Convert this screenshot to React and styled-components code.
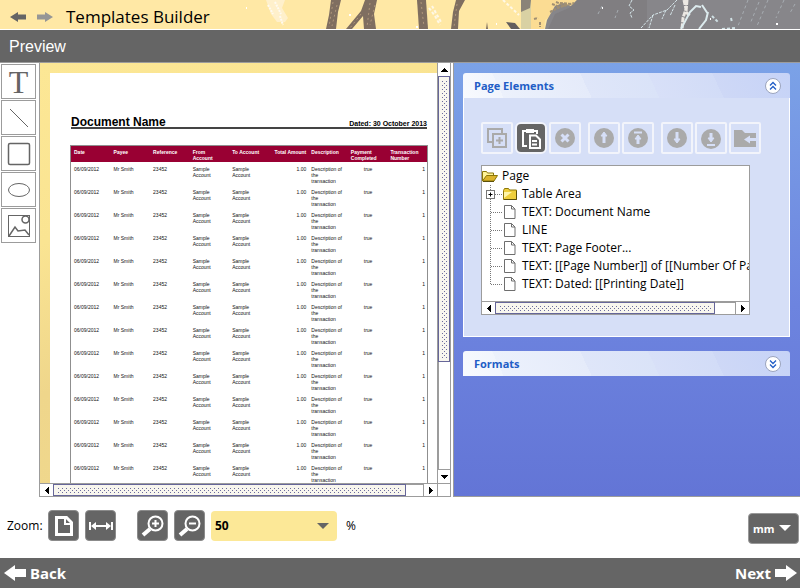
import React from "react";
import styled, { createGlobalStyle } from "styled-components";

const GlobalStyle = createGlobalStyle`
  *, *::before, *::after { box-sizing: border-box; }
  body { margin: 0; background: #fff; color: #000; font: 12px/18px "Open Sans", sans-serif; }
  button, select { margin: 0; padding: 0; border: 0; background: none; color: inherit; font: inherit; cursor: pointer; }
  h1, h2, h3, ul { margin: 0; padding: 0; font: inherit; list-style: none; }
  svg { display: block; flex: none; }
`;

const grey = "#656565";
const line = "#9c9c9c";

const Page = styled.div`
  display: flex;
  flex-direction: column;
  height: 100vh;
  overflow: hidden;
`;

/* Title bar */
const TitleBar = styled.header`
  position: relative;
  display: flex;
  align-items: center;
  flex: none;
  height: 30px;
  padding: 4px 10px 0;
  border-bottom: 1px solid #fff;
  background: #ffe8a5;
  overflow: hidden;
`;
const Artwork = styled.svg`
  position: absolute;
  inset: 0;
  width: 100%;
  height: 29px;
`;
const NavButton = styled.button`
  position: relative;
  margin-right: 11px;
  color: ${(p) => (p.$dim ? "#969696" : grey)};
`;
const Title = styled.h1`
  position: relative;
  padding-left: 2px;
  font-size: 17px;
  line-height: 24px;
`;
const PreviewBar = styled.div`
  flex: none;
  height: 33px;
  padding: 0 9px;
  border-bottom: 1px solid ${line};
  background: ${grey};
  color: #fff;
  font: 16px/33px "Liberation Sans", sans-serif;
`;

/* Workspace */
const Workspace = styled.main`
  display: flex;
  flex: 1;
  min-height: 0;
`;
const ToolColumn = styled.nav`
  display: flex;
  flex-direction: column;
  flex: none;
  gap: 1px;
  width: 39px;
  padding: 1px 3px 0 1px;
`;
const ToolButton = styled.button`
  display: grid;
  place-items: center;
  width: 35px;
  height: 35px;
  border: 1px solid ${line};
  background: #fff;
  font: 32px/32px "Liberation Serif", serif;
  color: ${grey};
`;
const Preview = styled.section`
  display: grid;
  flex: 1 1 412px;
  min-width: 0;
  grid-template: minmax(0, 1fr) 14px / minmax(0, 1fr) 14px;
  border-left: 1px solid ${line};
`;
const Canvas = styled.div`
  padding: 10px 0 0 10px;
  overflow: hidden;
  background: linear-gradient(155deg, #fce795 0%, #fae492 30%, #efd68b 55%, #f0da8f 100%);
`;
const Sheet = styled.article`
  min-height: 100%;
  padding: 43px 9px 0 20px;
  background: #fff;
  font-family: "Liberation Sans", sans-serif;
`;
const SheetHead = styled.div`
  display: flex;
  align-items: baseline;
  justify-content: space-between;
  height: 13px;
  margin: 0 1px 16px;
  border-bottom: 2px solid #444;
  line-height: 12px;
  font-weight: bold;
`;
const SheetTitle = styled.h2`
  font-size: 12px;
  font-weight: bold;
`;
const SheetDate = styled.span`
  font-size: 7px;
`;
const DataTable = styled.table`
  width: 100%;
  table-layout: fixed;
  border-collapse: separate;
  border-spacing: 0;
  border: 1px solid #8f8f8f;
  border-bottom: 0;
  font-size: 5px;
  line-height: 6px;
`;
const HeadCell = styled.th`
  height: 16px;
  padding: 3px 2px 1px 3px;
  background: #990033;
  color: #fff;
  text-align: ${(p) => p.$align || "left"};
  vertical-align: top;
  white-space: nowrap;
`;
const DataCell = styled.td`
  height: 23px;
  padding: 4px 2px 1px 3px;
  color: #111;
  text-align: ${(p) => p.$align || "left"};
  vertical-align: top;
  white-space: nowrap;
`;

/* Scroll bars */
const Bar = styled.div`
  display: flex;
  min-width: 0;
  min-height: 0;
  flex-direction: ${(p) => (p.$vertical ? "column" : "row")};
  border: 1px solid ${line};
  border-width: ${(p) => (p.$vertical ? "0 1px 0 1px" : "1px 0 1px 0")};
  background: #fff;
`;
const BarButton = styled.button`
  display: grid;
  place-items: center;
  flex: none;
  width: ${(p) => (p.$vertical ? "auto" : "13px")};
  height: ${(p) => (p.$vertical ? "13px" : "auto")};
  color: #000;
`;
const Thumb = styled.div`
  flex: ${(p) => p.$size};
  border: 1px solid #666699;
  padding: ${(p) => (p.$vertical ? "3px 2px" : "2px 3px")};
  background:
    conic-gradient(from 270deg at 1px 1px, #6b6b9e 25%, transparent 0) 3px 3px / 4px 4px content-box,
    conic-gradient(from 270deg at 1px 1px, #6b6b9e 25%, transparent 0) 1px 1px / 4px 4px content-box,
    #f8f6ee;
`;
const Groove = styled.div`
  flex: ${(p) => p.$size};
  border: 1px solid ${line};
  border-width: ${(p) => (p.$vertical ? "0 0 1px 1px" : "1px 1px 0 0")};
`;
const Corner = styled.div`
  border: 1px solid ${line};
`;

/* Side panel */
const Side = styled.aside`
  flex: 1 1 347px;
  min-width: 0;
  margin-left: 2px;
  padding: 10px 10px 0 9px;
  border: 1px solid ${line};
  border-width: 0 0 1px 1px;
  background: linear-gradient(#7ba2e7, #6d84df 56%, #6375d6);
`;
const Card = styled.section`
  margin-bottom: 14px;
`;
const CardHead = styled.div`
  display: flex;
  align-items: center;
  justify-content: space-between;
  height: 25px;
  padding: 0 9px 0 11px;
  border-radius: 3px 3px 0 0;
  background: linear-gradient(65deg,
    #f8fafe 0, #f1f5fd 12%, #ecf1fc 12%, #e5ebfa 38%, #dfe6f9 38%, #dae3f8 58%, #d8e0f8 58%, #d2dcf7 77%, #ced8f6 77%, #c6d3f7);
`;
const CardTitle = styled.h3`
  color: #215dc6;
  font-size: 11px;
  font-weight: bold;
`;
const CardBody = styled.div`
  padding: 24px 28px 21px 17px;
  border: 1px solid #fff;
  border-top: 0;
  background: #d6dff7;
`;
const Actions = styled.div`
  display: flex;
  gap: 7px;
`;
const ActionGroup = styled.div`
  display: flex;
  gap: 2px;
`;
const ActionButton = styled.button`
  display: grid;
  place-items: center;
  width: 32px;
  height: 32px;
  border: 2px solid #f2f4fb;
  border-radius: ${(p) => (p.$active ? "6px" : "2px")};
  background: ${(p) => (p.$active ? grey : "#d6dff7")};
  color: ${(p) => (p.$active ? "#fff" : "#aaaaaa")};
`;
const TreeBox = styled.div`
  display: flex;
  flex-direction: column;
  height: 150px;
  margin: 11px 11px 0 0;
  border: 1px solid ${line};
  background: #fff;
`;
const Tree = styled.ul`
  flex: 1;
  padding-top: 1px;
  overflow: hidden;
  white-space: nowrap;
`;
const Branch = styled.ul`
  padding-left: 8px;
`;
const TreeRow = styled.div`
  display: flex;
  align-items: center;
  gap: ${(p) => p.$gap};
  height: 18px;
`;
const NodeIcon = styled.span`
  display: grid;
  flex: none;
  justify-items: center;
  width: 16px;
  margin-right: 4px;
`;
const TreeBar = styled.div`
  display: grid;
  height: 14px;
  margin-bottom: -1px;
`;

/* Footer controls */
const ZoomBar = styled.div`
  display: flex;
  align-items: center;
  flex: none;
  height: 61px;
  padding: 0 1px 4px 7px;
`;
const Caption = styled.label`
  width: 41px;
`;
const DarkButton = styled.button`
  display: grid;
  place-items: center;
  width: 31px;
  height: 31px;
  margin-right: ${(p) => (p.$last ? "21px" : "6px")};
  border: 1px solid #8b8b8b;
  border-radius: 4px;
  background: ${grey};
  color: #fff;
`;
const Picker = styled.span`
  position: relative;
  width: ${(p) => (p.$dark ? "51px" : "126px")};
  margin-right: ${(p) => (p.$dark ? "0" : "9px")};
  margin-top: ${(p) => (p.$dark ? "6px" : "0")};
  margin-left: ${(p) => (p.$dark ? "auto" : "0")};
  color: ${(p) => (p.$dark ? "#fff" : grey)};
  & > svg {
    position: absolute;
    right: 8px;
    top: 12px;
    pointer-events: none;
  }
`;
const Select = styled.select`
  appearance: none;
  display: block;
  width: 100%;
  height: ${(p) => (p.$dark ? "31px" : "30px")};
  padding: 0 4px;
  border: ${(p) => (p.$dark ? "1px solid #999" : "0")};
  border-radius: 4px;
  background: ${(p) => (p.$dark ? grey : "#fce897")};
  color: ${(p) => (p.$dark ? "#fff" : "#000")};
  font: ${(p) => (p.$dark ? 'bold 11px "Noto Sans"' : 'bold 12px "Open Sans"')}, sans-serif;
`;
const Footer = styled.footer`
  display: flex;
  justify-content: space-between;
  flex: none;
  height: 30px;
  padding: 0 3px 0 4px;
  background: ${grey};
`;
const FooterButton = styled.button`
  display: flex;
  align-items: center;
  gap: 4px;
  color: #fff;
  font: bold 15px/30px "Noto Sans", sans-serif;
`;

const Arrow = ({ right, big }) => (
  <svg width={big ? 22 : 16} height={big ? 16 : 10} viewBox="0 0 16 10" preserveAspectRatio="none" fill="currentColor">
    <path d={right ? "M16 5 8 0v2.500H0v5h8V10z" : "M0 5 8 0v2.500h8v5H8V10z"} />
  </svg>
);
const Triangle = () => (
  <svg width="12" height="6" viewBox="0 0 12 6" fill="currentColor"><path d="M0 0h12L6 6z" /></svg>
);
const tips = {
  up: [7, 4, "M3 0h1v1h1v1h1v1h1v1H0V3h1V2h1V1h1z"],
  down: [7, 4, "M0 0h7v1H6v1H5v1H4v1H3V3H2V2H1V1H0z"],
  left: [4, 7, "M4 0v7H3V6H2V5H1V4H0V3h1V2h1V1h1V0z"],
  right: [4, 7, "M0 0h1v1h1v1h1v1h1v1H3v1H2v1H1v1H0z"],
};
const Tip = ({ dir }) => {
  const [w, h, d] = tips[dir];
  return <svg width={w} height={h} viewBox={`0 0 ${w} ${h}`} fill="currentColor"><path d={d} /></svg>;
};

function ScrollBar({ vertical, thumb, rest }) {
  return (
    <Bar $vertical={vertical}>
      <BarButton $vertical={vertical} aria-label={vertical ? "Scroll up" : "Scroll left"}><Tip dir={vertical ? "up" : "left"} /></BarButton>
      <Thumb $vertical={vertical} $size={thumb} />
      <Groove $vertical={vertical} $size={rest} />
      <BarButton $vertical={vertical} aria-label={vertical ? "Scroll down" : "Scroll right"}><Tip dir={vertical ? "down" : "right"} /></BarButton>
    </Bar>
  );
}

const Splashes = () => (
  <Artwork viewBox="0 0 800 29" preserveAspectRatio="xMaxYMin slice" aria-hidden="true">
    <path d="M266 0h19l-3 8 6 10-3 4h-8l-6-8z" fill="#fff0cb" />
    <path d="M268 5l5 9M275 2l6 12M280 16l3 9" stroke="#fffaf0" strokeWidth="2" strokeDasharray="2 1" />
    <g fill="#7f6e60">
      <path d="M331 0h10l-3 12-2 17h-10l3-14z" />
      <path d="M365 0h12l-3 14 2 15h-12l-1-13-11 13h-6l15-18z" />
      <path d="M417 0h9l2 29h-9z" />
      <path d="M456 0h9l-6 11-1 18h-7l2-17z" />
      <path d="M506 22l9 1 5 6h-9z" fill="#635e5d" />
      <path d="M487 22l1 7h-2z" />
    </g>
    <path d="M333 2l-4 25M337 5l-5 21M370 3l-3 24M375 5l-5 20M457 4l-3 23M361 14l-11 14M421 2l3 25" stroke="#b0977b" strokeDasharray="2 3" fill="none" />
    <path d="M429 8l6 8 5 9M432 6l9 16M503 0l16 15" stroke="#fff8e6" strokeWidth="2" strokeDasharray="3 2" fill="none" />
    <path d="M521 0h10v29h-10z" fill="#d9d1a3" />
    <path d="M521 0h10l-1 8-9 4z" fill="#8a8378" />
    <path d="M531 0h47l-3 5-14 5-16 10-1 9h-13z" fill="#fbdc93" />
    <path d="M577 0h223v29H545l2-9 8-14 8-3 8 3z" fill="#87868a" />
    <path d="M577 0h70v29H548l7-15 14-6z" fill="#7e7a7e" opacity=".7" />
    <path d="M552 4l8 3M556 2l10 4M550 12l10-5 14-4M560 3l12 1M534 19l4-1M540 22v5" stroke="#a08f73" strokeWidth="2" strokeDasharray="3 1" fill="none" />
    <path d="M632 0l-3 6 5 4-4 3 2 5M641 28l12-13 14-5 12-12M653 15l-4 13M666 10l-4 9M675 5l-5 11" stroke="#d5e5e9" strokeDasharray="3 1" fill="none" />
    <path d="M684 0l2 9-3 9-1 11M687 0l-1 12 4 4" stroke="#ece8e3" strokeWidth="3" strokeDasharray="5 1" fill="none" />
    <path d="M681 29l9-17 6-6 5 1M708 12l-2 8-7 9M702 5l6 9" stroke="#dcebee" strokeWidth="2" fill="none" />
    <path d="M712 16l6 6M722 29l14-1M731 18l1 4" stroke="#cfdfe3" strokeWidth="2" strokeDasharray="3 2" />
    <path d="M748 0l-10 26M759 2l-9 22M768 0l-11 26M784 0l-8 18M795 4l-5 9M602 6l-5 10M618 10l-3 8" stroke="#a7adb2" strokeDasharray="3 3" />
    <path d="M349 15h2M416 27h2M246 8h1M496 24h1M602 8h1M776 24h2M710 19h1" stroke="#fff" strokeWidth="2" />
  </Artwork>
);

const columns = [
  ["Date", "06/09/2012"],
  ["Payee", "Mr Smith"],
  ["Reference", "23452"],
  ["From\nAccount", "Sample\nAccount"],
  ["To Account", "Sample\nAccount"],
  ["Total Amount", "1.00", "right"],
  ["Description", "Description of\nthe\ntransaction"],
  ["Payment\nCompleted", "true", "center", "left"],
  ["Transaction\nNumber", "1", "right", "left"],
];
const Lines = ({ text }) =>
  text.split("\n").map((part, i) => (
    <React.Fragment key={i}>{i > 0 && <br />}{part}</React.Fragment>
  ));

const Document = () => (
  <Sheet>
    <SheetHead>
      <SheetTitle>Document Name</SheetTitle>
      <SheetDate>Dated: 30 October 2013</SheetDate>
    </SheetHead>
    <DataTable>
      <thead>
        <tr>{columns.map(([head, , align, headAlign]) => (
          <HeadCell key={head} scope="col" $align={headAlign || align}><Lines text={head} /></HeadCell>
        ))}</tr>
      </thead>
      <tbody>
        {Array.from({ length: 14 }, (_, row) => (
          <tr key={row}>{columns.map(([head, value, align]) => (
            <DataCell key={head} $align={align}><Lines text={value} /></DataCell>
          ))}</tr>
        ))}
      </tbody>
    </DataTable>
  </Sheet>
);

const Icon = ({ size = 24, children, ...rest }) => (
  <svg width={size} height={size} viewBox={`0 0 ${size} ${size}`} fill="none" stroke="currentColor" {...rest}>{children}</svg>
);

const tools = [
  ["Line", <path d="M3 3l18 18" />],
  ["Rectangle", <rect x="1.500" y="1.500" width="21" height="21" rx="1.500" strokeWidth="1.500" />],
  ["Ellipse", <ellipse cx="12" cy="12" rx="10.500" ry="6.500" />],
  ["Image", <><rect x="1.500" y="1.500" width="21" height="21" /><circle cx="18.500" cy="5.500" r="3.500" strokeWidth="1.500" /><path d="M2 22l6-9 3 4 7-1 4 5" strokeWidth="1.500" /></>],
];

const Disc = ({ children, y = 12 }) => (
  <Icon>
    <circle cx="12" cy={y} r="10" fill="currentColor" stroke="none" />
    <g stroke="#d6dff7" strokeWidth="2">{children}</g>
  </Icon>
);
const actions = [
  [
    ["Duplicate", <Icon strokeWidth="2"><path d="M8 16H3V3h14v5" /><rect x="8" y="8" width="13" height="13" /><path d="M14.500 11v7M11 14.500h7" /></Icon>],
    ["Paste", <Icon strokeWidth="2"><path d="M8 20H4V5h14v3" /><path d="M7 3h8v4H7z" fill="currentColor" stroke="none" /><path d="M11 9.500h6l4 4V22H11z" /><path d="M13 15h5M13 18.500h5" /></Icon>],
    ["Delete", <Disc><path d="M8.500 8.500l7 7M15.500 8.500l-7 7" strokeWidth="3" /></Disc>],
  ],
  [
    ["Move up", <Disc><path d="M12 9v8" strokeWidth="3" /><path d="M12 6l3 4H9z" fill="#d6dff7" strokeWidth="1" /></Disc>],
    ["Move to top", <Disc><path d="M8 6.500h8" /><path d="M12 12v6" strokeWidth="3" /><path d="M12 9l3 4H9z" fill="#d6dff7" strokeWidth="1" /></Disc>],
  ],
  [
    ["Move down", <Disc><path d="M12 6v8" strokeWidth="3" /><path d="M12 17l3-4H9z" fill="#d6dff7" strokeWidth="1" /></Disc>],
    ["Move to bottom", <Disc y={13}><path d="M8 19h8" /><path d="M12 7v6" strokeWidth="3" /><path d="M12 16l3-4H9z" fill="#d6dff7" strokeWidth="1" /></Disc>],
    ["Move to folder", <Icon><path d="M1 4h8l3 3h11v14H1z" fill="currentColor" stroke="none" /><path d="M23 13.500h-7" stroke="#d6dff7" strokeWidth="3" /><path d="M11 13.500l6-4v8z" fill="#d6dff7" stroke="none" /></Icon>],
  ],
];

const Toggle = ({ down, label }) => (
  <button aria-label={label}>
    <Icon size={16}>
      <circle cx="8" cy="8" r="7.500" fill="#fff" stroke="#9ba4bd" />
      <path d={down ? "M5 4.500l3 3 3-3M5 8.500l3 3 3-3" : "M5 7.500l3-3 3 3M5 11.500l3-3 3 3"} stroke="#215dc6" strokeWidth="1.300" />
    </Icon>
  </button>
);

const OpenFolder = () => (
  <Icon size={16} stroke="#8b7609">
    <path d="M.5 13V3.500h4l1 1.500h6v3" fill="#fff49a" />
    <path d="M.5 13l4-5.500h11L12 13z" fill="#dcb42c" />
    <path d="M1 13.500h11" stroke="#5d5008" />
  </Icon>
);
const Folder = () => (
  <svg width="14" height="14" viewBox="0 0 14 14">
    <path d="M.5 12.500V3.500l1-2h4l1 1.500h7v9.500z" fill="#efcf3c" stroke="#8b7609" />
    <path d="M1 5h8l-8 6z" fill="#fff6a8" />
    <path d="M1 12.500h12.500V4" fill="none" stroke="#5d5008" />
  </svg>
);
const Leaf = () => (
  <svg width="12" height="14" viewBox="0 0 12 14">
    <path d="M.5.5h7l3.500 3.500v9.500H.5z" fill="#fff" stroke="#6e6e6e" />
    <path d="M7.500.5V4H11" fill="none" stroke="#6e6e6e" />
  </svg>
);
const Twig = ({ last, expandable }) => (
  <svg width="12" height="18" viewBox="0 0 12 18" overflow="visible">
    <path d={last ? "M.5 0v9" : "M.5 0v18"} stroke="#777" strokeDasharray="1 1" />
    <path d="M1 9.500h11" stroke="#777" strokeDasharray="1 1" />
    {expandable && <><rect x="-3.500" y="5.500" width="8" height="8" fill="#fff" stroke="#777" /><path d="M-1.500 9.500h4M.5 7.500v4" stroke="#000" /></>}
  </svg>
);

const nodes = [
  "Table Area",
  "TEXT: Document Name",
  "LINE",
  "TEXT: Page Footer...",
  "TEXT: [[Page Number]] of [[Number Of Pages]]",
  "TEXT: Dated: [[Printing Date]]",
];

export default function App() {
  return (
    <Page>
      <GlobalStyle />
      <TitleBar>
        <Splashes />
        <NavButton aria-label="Back"><Arrow /></NavButton>
        <NavButton $dim aria-label="Forward"><Arrow right /></NavButton>
        <Title>Templates Builder</Title>
      </TitleBar>
      <PreviewBar>Preview</PreviewBar>

      <Workspace>
        <ToolColumn>
          <ToolButton aria-label="Text tool">T</ToolButton>
          {tools.map(([name, art]) => (
            <ToolButton key={name} aria-label={name}><Icon>{art}</Icon></ToolButton>
          ))}
        </ToolColumn>

        <Preview>
          <Canvas><Document /></Canvas>
          <ScrollBar vertical thumb={284} rest={110} />
          <ScrollBar thumb={354} rest={17} />
          <Corner />
        </Preview>

        <Side>
          <Card>
            <CardHead>
              <CardTitle>Page Elements</CardTitle>
              <Toggle label="Collapse Page Elements" />
            </CardHead>
            <CardBody>
              <Actions>
                {actions.map((group, i) => (
                  <ActionGroup key={i}>
                    {group.map(([name, icon]) => (
                      <ActionButton key={name} aria-label={name} $active={name === "Paste"}>{icon}</ActionButton>
                    ))}
                  </ActionGroup>
                ))}
              </Actions>
              <TreeBox>
                <Tree>
                  <li>
                    <TreeRow $gap="4px"><OpenFolder />Page</TreeRow>
                    <Branch>
                      {nodes.map((name, i) => (
                        <li key={name}>
                          <TreeRow $gap="0">
                            <Twig expandable={i === 0} last={i === nodes.length - 1} />
                            <NodeIcon>{i === 0 ? <Folder /> : <Leaf />}</NodeIcon>
                            {name}
                          </TreeRow>
                        </li>
                      ))}
                    </Branch>
                  </li>
                </Tree>
                <TreeBar><ScrollBar thumb={219} rest={21} /></TreeBar>
              </TreeBox>
            </CardBody>
          </Card>
          <Card>
            <CardHead>
              <CardTitle>Formats</CardTitle>
              <Toggle down label="Expand Formats" />
            </CardHead>
          </Card>
        </Side>
      </Workspace>

      <ZoomBar>
        <Caption htmlFor="zoom">Zoom:</Caption>
        <DarkButton aria-label="Fit page"><Icon strokeWidth="3"><path d="M4.500 3.500h10l5 5v12h-15z" /><path d="M13 3v7h7" strokeWidth="2" /></Icon></DarkButton>
        <DarkButton $last aria-label="Fit width"><Icon strokeWidth="2"><path d="M1 8v8M23 8v8M4 12h16" /><path d="M2 12l5-4v8zM22 12l-5-4v8z" fill="currentColor" stroke="none" /></Icon></DarkButton>
        <DarkButton aria-label="Zoom in"><Icon strokeWidth="2"><circle cx="14.500" cy="9.500" r="7" /><path d="M14.500 6v7M11 9.500h7" /><path d="M9 15l-7 6" strokeWidth="4" /></Icon></DarkButton>
        <DarkButton aria-label="Zoom out"><Icon strokeWidth="2"><circle cx="14.500" cy="9.500" r="7" /><path d="M11 9.500h7" /><path d="M9 15l-7 6" strokeWidth="4" /></Icon></DarkButton>
        <Picker>
          <Select id="zoom" defaultValue="50"><option>50</option><option>75</option><option>100</option></Select>
          <Triangle />
        </Picker>
        <span>%</span>
        <Picker $dark>
          <Select $dark aria-label="Units" defaultValue="mm"><option>mm</option><option>cm</option></Select>
          <Triangle />
        </Picker>
      </ZoomBar>

      <Footer>
        <FooterButton><Arrow big />Back</FooterButton>
        <FooterButton>Next<Arrow big right /></FooterButton>
      </Footer>
    </Page>
  );
}
